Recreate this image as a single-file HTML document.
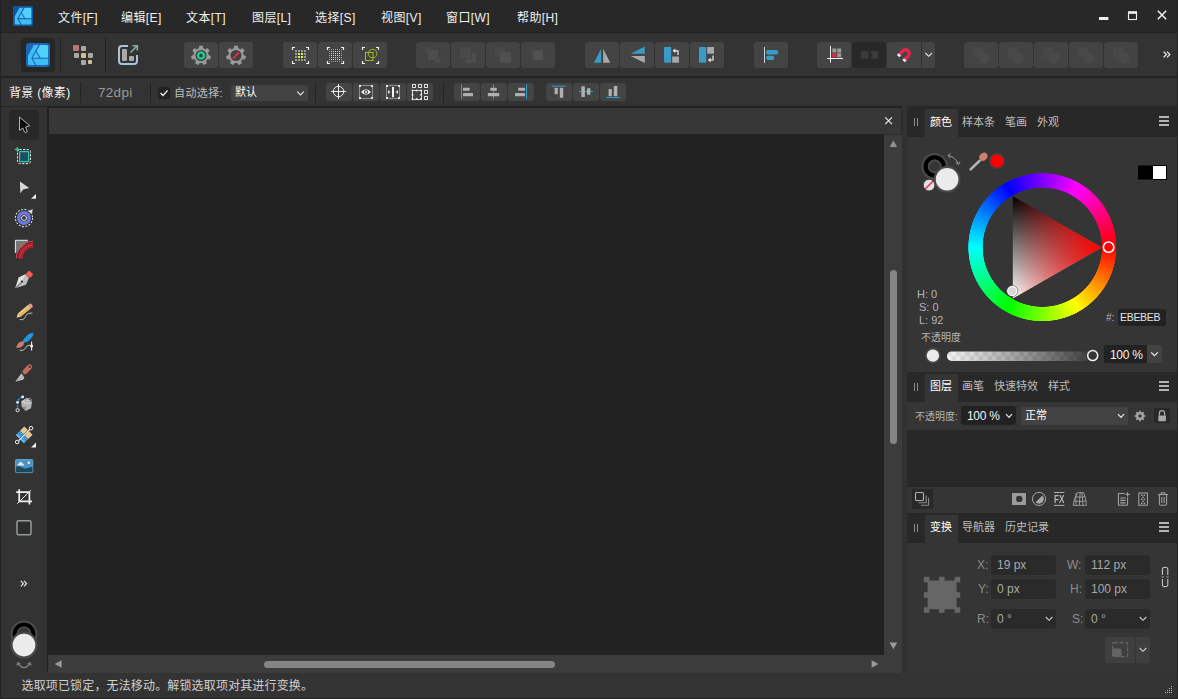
<!DOCTYPE html>
<html lang="zh-CN">
<head>
<meta charset="utf-8">
<title>Affinity Designer</title>
<style>
html,body{margin:0;padding:0;}
body{width:1178px;height:699px;overflow:hidden;background:#262626;position:relative;
 font-family:"Liberation Sans","Noto Sans CJK SC",sans-serif;color:#e6e6e6;font-size:12px;}
.abs,.abs *{position:absolute;}
#app{position:absolute;left:0;top:0;width:1178px;height:699px;overflow:hidden;background:#222222;}
#app div,#app span,#app svg{position:absolute;box-sizing:border-box;}
.t{white-space:nowrap;line-height:1;}
/* bars */
#menubar{left:1px;top:0;width:1176px;height:32px;background:#282828;border-top:1px solid #252525;}
#menubar .t{top:11px;font-size:12px;color:#f0f0f0;letter-spacing:.4px;}
#toolbar{left:1px;top:33px;width:1176px;height:43px;background:#333333;}
#ctxbar{left:1px;top:78px;width:1176px;height:28px;background:#333333;}
.tb{top:9px;width:34px;height:26px;background:#444444;border-radius:3px;}
.tb.dis{background:#434343;}
.cb{top:5px;width:26px;height:18px;background:#444444;border-radius:3px;}
.vsep{width:1px;background:#232323;}
/* left tools */
#tools{left:1px;top:107px;width:46px;height:566px;background:#333333;}
/* canvas */
#doctab{left:49px;top:108px;width:853px;height:27px;background:#373737;border-right:1px solid #2c2c2c;border-bottom:1px solid #2c2c2c;}
#canvas{left:49px;top:134px;width:835px;height:521px;background:#222222;}
#vscroll{left:884px;top:135px;width:18px;height:520px;background:#3c3c3c;}
#hscroll{left:48px;top:655px;width:854px;height:18px;background:#3c3c3c;}
#gap{left:902px;top:106px;width:5px;height:567px;background:#313131;}
/* right panels */
#right{left:907px;top:106px;width:270px;height:567px;background:#353535;}
.phead{left:0;width:270px;background:#282828;}
.ptab{background:#353535;}
.phtxt{font-size:11px;color:#bdbdbd;}
.phtxt.on{color:#ffffff;}
.lbl{font-size:11px;color:#b4b4b4;}
.ham{width:10px;height:10px;}
.ham i{position:absolute;left:0;width:10px;height:2px;background:#b4b4b4;}
.grip i{position:absolute;top:1px;width:1px;height:8px;background:#8a8a8a;}
#status{left:1px;top:673px;width:1176px;height:25px;background:#333333;}
</style>
</head>
<body>
<div id="app">

<!-- MENU BAR -->
<div id="menubar">
<svg style="left:12px;top:5px" width="20" height="20" viewBox="0 0 24 24"><g><rect width="24" height="24" rx="1.6" fill="#17529c"/><path d="M7.8 2 L12.7 2 L5.2 15.3 L9.1 22.1 L3.5 22.1 a1.5 1.5 0 0 1 -1.5 -1.5 L2 12.7Z" fill="#3ebef5"/><path d="M14 2 L20.6 2 a1.5 1.5 0 0 1 1.5 1.5 L22.1 14.8 L14.6 14.8 L10.6 8Z" fill="#50d1f9"/><path d="M10 9 L13.4 14.8 L6.7 14.8Z" fill="#45c8f8"/><path d="M6.7 15.8 L22.1 15.8 L22.1 20.6 a1.5 1.5 0 0 1 -1.5 1.5 L10.4 22.1Z" fill="#3dbff6"/></g></svg>
  <svg style="left:1089px;top:-1px" width="88" height="32" viewBox="1090 0 88 32"><rect x="1099" y="17" width="9.4" height="3" fill="#f0f0f0"/><rect x="1128.5" y="12.5" width="8" height="7" fill="none" stroke="#f0f0f0" stroke-width="1.1"/><rect x="1128" y="11.2" width="9" height="2.6" fill="#f0f0f0"/><path d="M1157.8 10.8 L1166.2 19.2 M1166.2 10.8 L1157.8 19.2" stroke="#f0f0f0" stroke-width="1.5"/></svg>
  <span class="t" style="left:57px">文件[F]</span>
  <span class="t" style="left:120px">编辑[E]</span>
  <span class="t" style="left:185px">文本[T]</span>
  <span class="t" style="left:251px">图层[L]</span>
  <span class="t" style="left:314px">选择[S]</span>
  <span class="t" style="left:380px">视图[V]</span>
  <span class="t" style="left:445px">窗口[W]</span>
  <span class="t" style="left:516px">帮助[H]</span>
</div>

<!-- MAIN TOOLBAR -->
<div id="toolbar">
<div style="left:20px;top:5px;width:34px;height:34px;background:#262626;border-radius:3px"></div>
<div class="vsep" style="left:59px;top:5px;height:34px"></div>
<div class="vsep" style="left:104px;top:5px;height:34px"></div>
<div class="tb " style="left:183px"></div>
<div class="tb " style="left:218px"></div>
<div class="tb " style="left:282px"></div>
<div class="tb " style="left:317px"></div>
<div class="tb " style="left:352px"></div>
<div class="tb dis" style="left:415px"></div>
<div class="tb dis" style="left:450px"></div>
<div class="tb dis" style="left:485px"></div>
<div class="tb dis" style="left:520px"></div>
<div class="tb " style="left:584px"></div>
<div class="tb " style="left:619px"></div>
<div class="tb " style="left:654px"></div>
<div class="tb " style="left:689px"></div>
<div class="tb " style="left:753px"></div>
<div class="tb " style="left:816px"></div>
<div class="tb" style="left:851px;background:#282828"></div>
<div class="tb" style="left:886px;border-radius:2px 0 0 2px"></div>
<div class="tb" style="left:921px;width:13px;border-radius:0 2px 2px 0"></div>
<div class="tb dis" style="left:963px"></div>
<div class="tb dis" style="left:998px"></div>
<div class="tb dis" style="left:1033px"></div>
<div class="tb dis" style="left:1068px"></div>
<div class="tb dis" style="left:1103px"></div>
<svg style="left:-1px;top:-33px" width="1178" height="110" viewBox="0 0 1178 110">
<g id="lg" transform="translate(26,43)"><rect width="24" height="24" rx="3" fill="#1c66b6"/><path d="M7.8 2 L12.7 2 L5.2 15.3 L9.1 22.1 L3.5 22.1 a1.5 1.5 0 0 1 -1.5 -1.5 L2 12.7Z" fill="#3ebef5"/><path d="M14 2 L20.6 2 a1.5 1.5 0 0 1 1.5 1.5 L22.1 14.8 L14.6 14.8 L10.6 8Z" fill="#50d1f9"/><path d="M10 9 L13.4 14.8 L6.7 14.8Z" fill="#45c8f8"/><path d="M6.7 15.8 L22.1 15.8 L22.1 20.6 a1.5 1.5 0 0 1 -1.5 1.5 L10.4 22.1Z" fill="#3dbff6"/></g>
<rect x="73" y="45" width="6" height="6" rx="1" fill="#b87678"/>
<rect x="81" y="46" width="5" height="5" rx="1" fill="#a8a8a8"/>
<rect x="74" y="53" width="5" height="5" rx="1" fill="#a8a8a8"/>
<rect x="81" y="53" width="5" height="5" rx="1" fill="#cfc08e"/>
<rect x="88" y="53" width="5" height="5" rx="1" fill="#a8a8a8"/>
<rect x="81" y="60" width="5" height="5" rx="1" fill="#a8a8a8"/>
<rect x="88" y="60" width="4" height="4" rx="1" fill="#cfc08e"/>
<path d="M128 46 H122 a3 3 0 0 0 -3 3 V61 a3 3 0 0 0 3 3 H134 a3 3 0 0 0 3 -3 V55" fill="none" stroke="#a9c4d6" stroke-width="2"/>
<rect x="122" y="49" width="5" height="12" rx="1" fill="#a8a8a8"/><rect x="129" y="56" width="5" height="5" rx="1" fill="#a8a8a8"/>
<path d="M130.5 52.5 L137 46 M132.5 45.8 H137.3 V50.6" fill="none" stroke="#7fae9c" stroke-width="1.6"/>
<g transform="translate(201,55.5)"><path d="M-1.75 -7.09 L-1.44 -9.39 L1.44 -9.39 L1.75 -7.09 L4.45 -5.79 L6.44 -6.98 L8.24 -4.73 L6.63 -3.05 L7.30 -0.13 L9.48 0.68 L8.83 3.50 L6.52 3.28 L4.65 5.62 L5.38 7.83 L2.77 9.09 L1.50 7.14 L-1.50 7.14 L-2.77 9.09 L-5.38 7.83 L-4.65 5.62 L-6.52 3.28 L-8.83 3.50 L-9.48 0.68 L-7.30 -0.13 L-6.63 -3.05 L-8.24 -4.73 L-6.44 -6.98 L-4.45 -5.79Z" fill="#9c9c9c" stroke="#9c9c9c" stroke-width=".8" stroke-linejoin="round"/><circle r="5.5" fill="#3a3a3a"/><circle r="3" fill="none" stroke="#1fc890" stroke-width="2.6"/></g>
<g transform="translate(236,55.5)"><path d="M-1.75 -7.09 L-1.44 -9.39 L1.44 -9.39 L1.75 -7.09 L4.45 -5.79 L6.44 -6.98 L8.24 -4.73 L6.63 -3.05 L7.30 -0.13 L9.48 0.68 L8.83 3.50 L6.52 3.28 L4.65 5.62 L5.38 7.83 L2.77 9.09 L1.50 7.14 L-1.50 7.14 L-2.77 9.09 L-5.38 7.83 L-4.65 5.62 L-6.52 3.28 L-8.83 3.50 L-9.48 0.68 L-7.30 -0.13 L-6.63 -3.05 L-8.24 -4.73 L-6.44 -6.98 L-4.45 -5.79Z" fill="#9c9c9c" stroke="#9c9c9c" stroke-width=".8" stroke-linejoin="round"/><circle r="5.5" fill="#424242"/><path d="M-3 3 L3 -3" stroke="#e8284a" stroke-width="2"/></g>
<path d="M292.5 50 v-2.5 h2.5 M306 47.5 h2.5 v2.5 M308.5 61 v2.5 h-2.5 M295 63.5 h-2.5 v-2.5" fill="none" stroke="#f0f0f0" stroke-width="1.2"/>
<rect x="295" y="50" width="2" height="2" fill="#9a9a9a"/>
<rect x="295" y="53" width="2" height="2" fill="#9a9a9a"/>
<rect x="295" y="56" width="2" height="2" fill="#9a9a9a"/>
<rect x="295" y="59" width="2" height="2" fill="#9a9a9a"/>
<rect x="298" y="50" width="2" height="2" fill="#9a9a9a"/>
<rect x="298" y="53" width="2" height="2" fill="#e6f23a"/>
<rect x="298" y="56" width="2" height="2" fill="#e6f23a"/>
<rect x="298" y="59" width="2" height="2" fill="#9a9a9a"/>
<rect x="301" y="50" width="2" height="2" fill="#9a9a9a"/>
<rect x="301" y="53" width="2" height="2" fill="#e6f23a"/>
<rect x="301" y="56" width="2" height="2" fill="#e6f23a"/>
<rect x="301" y="59" width="2" height="2" fill="#9a9a9a"/>
<rect x="304" y="50" width="2" height="2" fill="#9a9a9a"/>
<rect x="304" y="53" width="2" height="2" fill="#9a9a9a"/>
<rect x="304" y="56" width="2" height="2" fill="#9a9a9a"/>
<rect x="304" y="59" width="2" height="2" fill="#9a9a9a"/>
<path d="M327.5 50 v-2.5 h2.5 M341 47.5 h2.5 v2.5 M343.5 61 v2.5 h-2.5 M330 63.5 h-2.5 v-2.5" fill="none" stroke="#f0f0f0" stroke-width="1.2"/>
<rect x="329" y="49" width="1" height="1" fill="#9a9a9a"/>
<rect x="329" y="51" width="1" height="1" fill="#9a9a9a"/>
<rect x="329" y="53" width="1" height="1" fill="#9a9a9a"/>
<rect x="329" y="55" width="1" height="1" fill="#9a9a9a"/>
<rect x="329" y="57" width="1" height="1" fill="#9a9a9a"/>
<rect x="329" y="59" width="1" height="1" fill="#9a9a9a"/>
<rect x="329" y="61" width="1" height="1" fill="#9a9a9a"/>
<rect x="331" y="49" width="1" height="1" fill="#9a9a9a"/>
<rect x="331" y="51" width="1" height="1" fill="#dfee3a"/>
<rect x="331" y="53" width="1" height="1" fill="#dfee3a"/>
<rect x="331" y="55" width="1" height="1" fill="#dfee3a"/>
<rect x="331" y="57" width="1" height="1" fill="#dfee3a"/>
<rect x="331" y="59" width="1" height="1" fill="#dfee3a"/>
<rect x="331" y="61" width="1" height="1" fill="#9a9a9a"/>
<rect x="333" y="49" width="1" height="1" fill="#9a9a9a"/>
<rect x="333" y="51" width="1" height="1" fill="#dfee3a"/>
<rect x="333" y="53" width="1" height="1" fill="#dfee3a"/>
<rect x="333" y="55" width="1" height="1" fill="#dfee3a"/>
<rect x="333" y="57" width="1" height="1" fill="#dfee3a"/>
<rect x="333" y="59" width="1" height="1" fill="#dfee3a"/>
<rect x="333" y="61" width="1" height="1" fill="#9a9a9a"/>
<rect x="335" y="49" width="1" height="1" fill="#9a9a9a"/>
<rect x="335" y="51" width="1" height="1" fill="#dfee3a"/>
<rect x="335" y="53" width="1" height="1" fill="#dfee3a"/>
<rect x="335" y="55" width="1" height="1" fill="#dfee3a"/>
<rect x="335" y="57" width="1" height="1" fill="#dfee3a"/>
<rect x="335" y="59" width="1" height="1" fill="#dfee3a"/>
<rect x="335" y="61" width="1" height="1" fill="#9a9a9a"/>
<rect x="337" y="49" width="1" height="1" fill="#9a9a9a"/>
<rect x="337" y="51" width="1" height="1" fill="#dfee3a"/>
<rect x="337" y="53" width="1" height="1" fill="#dfee3a"/>
<rect x="337" y="55" width="1" height="1" fill="#dfee3a"/>
<rect x="337" y="57" width="1" height="1" fill="#dfee3a"/>
<rect x="337" y="59" width="1" height="1" fill="#dfee3a"/>
<rect x="337" y="61" width="1" height="1" fill="#9a9a9a"/>
<rect x="339" y="49" width="1" height="1" fill="#9a9a9a"/>
<rect x="339" y="51" width="1" height="1" fill="#dfee3a"/>
<rect x="339" y="53" width="1" height="1" fill="#dfee3a"/>
<rect x="339" y="55" width="1" height="1" fill="#dfee3a"/>
<rect x="339" y="57" width="1" height="1" fill="#dfee3a"/>
<rect x="339" y="59" width="1" height="1" fill="#dfee3a"/>
<rect x="339" y="61" width="1" height="1" fill="#9a9a9a"/>
<rect x="341" y="49" width="1" height="1" fill="#9a9a9a"/>
<rect x="341" y="51" width="1" height="1" fill="#9a9a9a"/>
<rect x="341" y="53" width="1" height="1" fill="#9a9a9a"/>
<rect x="341" y="55" width="1" height="1" fill="#9a9a9a"/>
<rect x="341" y="57" width="1" height="1" fill="#9a9a9a"/>
<rect x="341" y="59" width="1" height="1" fill="#9a9a9a"/>
<rect x="341" y="61" width="1" height="1" fill="#9a9a9a"/>
<path d="M362.5 50 v-2.5 h2.5 M376 47.5 h2.5 v2.5 M378.5 61 v2.5 h-2.5 M365 63.5 h-2.5 v-2.5" fill="none" stroke="#f0f0f0" stroke-width="1.2"/>
<rect x="365.5" y="52.5" width="7.5" height="8" fill="none" stroke="#a4b81a" stroke-width="1"/><circle cx="372.6" cy="53.6" r="4.3" fill="none" stroke="#a4b81a" stroke-width="1"/>
<rect x="425" y="47" width="6" height="6" rx="1" fill="#494949"/><rect x="428" y="50" width="10" height="10" rx="1" fill="#4e4e4e"/><rect x="434.5" y="57" width="6" height="6" rx="1" fill="#4a4a4a"/>
<rect x="460" y="47" width="11" height="11" rx="1.5" fill="#494949"/><path d="M472 53 h4 v9.5 h-10 v-3.5 h6z" fill="#4e4e4e"/>
<rect x="495" y="47" width="10" height="10" rx="1.5" fill="#494949"/><rect x="500" y="52" width="11" height="11" rx="1.5" fill="#505050"/>
<rect x="530" y="47" width="6" height="6" rx="1" fill="#464646"/><rect x="539" y="57" width="6" height="6" rx="1" fill="#464646"/><rect x="533" y="50" width="10" height="10" rx="1.5" fill="#515151"/>
<path d="M594 62.7 H601.1 V48.7Z" fill="#3a9bc7"/><path d="M603.1 48.7 V62.7 H610.3Z" fill="#a8a8a8"/>
<path d="M630.7 53.7 L644.8 46.5 V53.7Z" fill="#3a9bc7"/><path d="M630.7 56 H644.8 V63.1Z" fill="#a8a8a8"/>
<rect x="664" y="47" width="7.2" height="15.7" rx="1" fill="#3a9bc7"/><rect x="672.2" y="56.5" width="6.8" height="6.2" fill="#a8a8a8"/><path d="M678 55 V50.8 H674" fill="none" stroke="#f0f0f0" stroke-width="1.2"/><path d="M672.6 50.8 L675.3 48.6 V53Z" fill="#f0f0f0"/>
<rect x="699" y="47" width="7.2" height="15.7" rx="1" fill="#3a9bc7"/><rect x="707.2" y="47" width="6.8" height="6.7" fill="#a8a8a8"/><path d="M713 55.6 V60 H709.5" fill="none" stroke="#f0f0f0" stroke-width="1.2"/><path d="M707.8 60 L710.6 57.8 V62.2Z" fill="#f0f0f0"/>
<rect x="764" y="47" width="1" height="16" fill="#d0d0d0"/><rect x="766" y="50" width="12.2" height="4.4" rx="2" fill="#3a9bc7"/><rect x="766" y="55.7" width="8.2" height="4.4" rx="2" fill="#3a9bc7"/>
<rect x="830" y="46" width="1" height="16.5" fill="#f0f0f0"/><rect x="827" y="58" width="16" height="1" fill="#f0f0f0"/>
<rect x="832.3" y="48.5" width="4" height="4" fill="#9a9a9a"/><rect x="837.2" y="48.5" width="4" height="4" fill="#9a9a9a"/><rect x="832.3" y="53.3" width="4" height="4" fill="#e8284a"/><rect x="837.2" y="53.3" width="4" height="4" fill="#9a9a9a"/>
<rect x="861" y="51.2" width="7.5" height="7.4" fill="#3c3c3c"/><path d="M870 51.2 h8 v7.4 h-8 l2.6 -3.7z" fill="#3c3c3c"/>
<g transform="translate(905.6,53.4) rotate(42)"><path d="M-3.7 5.2 V0 a3.7 3.7 0 0 1 7.4 0 V5.2" fill="none" stroke="#e3274a" stroke-width="3.4"/><rect x="-5.4" y="4.6" width="3.4" height="2.4" fill="#f0f0f0"/><rect x="2" y="4.6" width="3.4" height="2.4" fill="#f0f0f0"/></g>
<path d="M925.4 53 L928.7 56.3 L932 53" fill="none" stroke="#e8e8e8" stroke-width="1.1"/>
<rect x="973" y="47.3" width="10.3" height="10.3" fill="#484848"/><circle cx="984" cy="58.3" r="5.4" fill="#4a4a4a"/>
<rect x="1008" y="47.3" width="10.3" height="10.3" fill="#484848"/><circle cx="1019" cy="58.3" r="5.4" fill="#4a4a4a"/>
<rect x="1043" y="47.3" width="10.3" height="10.3" fill="#484848"/><circle cx="1054" cy="58.3" r="5.4" fill="#4a4a4a"/>
<rect x="1078" y="47.3" width="10.3" height="10.3" fill="#484848"/><circle cx="1089" cy="58.3" r="5.4" fill="#4a4a4a"/>
<rect x="1113" y="47.3" width="10.3" height="10.3" fill="#484848"/><circle cx="1124" cy="58.3" r="5.4" fill="#4a4a4a"/>
<path d="M1163.6 51.6 L1166.4 54.5 L1163.6 57.4 M1167 51.6 L1169.8 54.5 L1167 57.4" fill="none" stroke="#e6e6e6" stroke-width="1.3"/>
</svg>
</div>

<!-- CONTEXT BAR -->
<div id="ctxbar">
<span class="t" style="left:8px;top:9px;font-size:12px;letter-spacing:.3px;color:#f2f2f2">背景 (像素)</span>
<div class="vsep" style="left:79px;top:4px;height:21px"></div>
<span class="t" style="left:97px;top:8px;font-size:13.5px;letter-spacing:.3px;color:#9a9a9a">72dpi</span>
<div class="vsep" style="left:149px;top:4px;height:21px"></div>
<div style="left:157px;top:9px;width:12px;height:12px;background:#222;border-radius:2px"></div>
<span class="t" style="left:173px;top:10px;font-size:11px;letter-spacing:.4px;color:#bdbdbd">自动选择:</span>
<div style="left:230px;top:7px;width:77px;height:16px;background:#424242;border-radius:2px"></div>
<span class="t" style="left:234px;top:9px;font-size:11px;color:#ffffff">默认</span>
<div class="vsep" style="left:314px;top:4px;height:21px"></div>
<div class="cb" style="left:325px"></div>
<div class="cb" style="left:352px"></div>
<div class="cb" style="left:379px"></div>
<div class="cb" style="left:406px"></div>
<div class="vsep" style="left:442px;top:4px;height:21px"></div>
<div class="cb" style="left:453px"></div>
<div class="cb" style="left:480px"></div>
<div class="cb" style="left:507px"></div>
<div class="cb" style="left:545px"></div>
<div class="cb" style="left:572px"></div>
<div class="cb" style="left:599px"></div>
<svg style="left:-1px;top:-78px" width="1178" height="110" viewBox="0 0 1178 110">
<path d="M160.6 93 L163 95.5 L167.6 90.4" fill="none" stroke="#f0f0f0" stroke-width="1.4"/>
<path d="M297.2 91.7 L300.5 95 L303.8 91.7" fill="none" stroke="#e8e8e8" stroke-width="1.1"/>
<g stroke="#efefef" stroke-width="1" fill="none"><circle cx="338.5" cy="91.5" r="5.2"/><path d="M331 91.5 H346 M338.5 84 V99"/></g>
<rect x="359.5" y="85.5" width="13" height="13" fill="none" stroke="#8e8e8e" stroke-width="1"/><rect x="359" y="85" width="2" height="2" fill="#e4e4e4"/><rect x="371" y="85" width="2" height="2" fill="#e4e4e4"/><rect x="359" y="97" width="2" height="2" fill="#e4e4e4"/><rect x="371" y="97" width="2" height="2" fill="#e4e4e4"/>
<path d="M361 92 Q366 86.6 371 92 Q366 97.4 361 92Z" fill="#f4f4f4"/><circle cx="366" cy="92" r="2.1" fill="#424242"/><circle cx="366" cy="92" r="1" fill="#f4f4f4"/>
<rect x="386.5" y="85.5" width="13" height="13" fill="none" stroke="#8e8e8e" stroke-width="1"/><rect x="386" y="85" width="2" height="2" fill="#e4e4e4"/><rect x="398" y="85" width="2" height="2" fill="#e4e4e4"/><rect x="386" y="97" width="2" height="2" fill="#e4e4e4"/><rect x="398" y="97" width="2" height="2" fill="#e4e4e4"/>
<rect x="392" y="87" width="2" height="10.2" fill="#f4f4f4"/><path d="M388 90 L390.4 92 L388 94Z M398 90 L395.6 92 L398 94Z" fill="#e0e0e0"/>
<rect x="412.5" y="84.5" width="3" height="3" fill="none" stroke="#d8d8d8" stroke-width="1"/>
<rect x="418.5" y="84.5" width="3" height="3" fill="none" stroke="#d8d8d8" stroke-width="1"/>
<rect x="424.5" y="84.5" width="3" height="3" fill="none" stroke="#d8d8d8" stroke-width="1"/>
<rect x="424.5" y="90.5" width="3" height="3" fill="none" stroke="#d8d8d8" stroke-width="1"/>
<rect x="424.5" y="96.5" width="3" height="3" fill="none" stroke="#d8d8d8" stroke-width="1"/>
<rect x="412.5" y="90.5" width="9" height="9" fill="none" stroke="#d0d0d0" stroke-width="1"/>
<rect x="411.7" y="89.7" width="1.6" height="1.6" fill="#f4f4f4"/>
<rect x="415.9" y="89.7" width="1.6" height="1.6" fill="#f4f4f4"/>
<rect x="420.2" y="89.7" width="1.6" height="1.6" fill="#f4f4f4"/>
<rect x="411.7" y="93.9" width="1.6" height="1.6" fill="#f4f4f4"/>
<rect x="420.2" y="93.9" width="1.6" height="1.6" fill="#f4f4f4"/>
<rect x="411.7" y="98.2" width="1.6" height="1.6" fill="#f4f4f4"/>
<rect x="415.9" y="98.2" width="1.6" height="1.6" fill="#f4f4f4"/>
<rect x="420.2" y="98.2" width="1.6" height="1.6" fill="#f4f4f4"/>
<rect x="461" y="84.5" width="1" height="14.5" fill="#2f9fd0"/><rect x="463" y="87.8" width="6.6" height="3" rx=".5" fill="#b0b0b0"/><rect x="463" y="93" width="10" height="3.2" rx=".5" fill="#b0b0b0"/>
<rect x="493" y="84.5" width="1" height="14.5" fill="#2f9fd0"/><rect x="490.3" y="87.8" width="6.4" height="3" rx=".5" fill="#b0b0b0"/><rect x="487.8" y="93" width="11.4" height="3.2" rx=".5" fill="#b0b0b0"/>
<rect x="526" y="84.5" width="1" height="14.5" fill="#2f9fd0"/><rect x="518.3" y="87.8" width="6.7" height="3" rx=".5" fill="#b0b0b0"/><rect x="515" y="93" width="10" height="3.2" rx=".5" fill="#b0b0b0"/>
<rect x="552" y="85.7" width="14" height="1" fill="#2f9fd0"/><rect x="554.6" y="87.8" width="3.2" height="6.5" rx=".5" fill="#b0b0b0"/><rect x="559.8" y="87.8" width="3.4" height="10" rx=".5" fill="#b0b0b0"/>
<rect x="579" y="91" width="14" height="1" fill="#2f9fd0"/><rect x="581.4" y="86.2" width="3.5" height="10.8" rx=".5" fill="#b0b0b0"/><rect x="587" y="88.3" width="3.4" height="6.4" rx=".5" fill="#b0b0b0"/>
<rect x="606" y="97" width="14" height="1" fill="#2f9fd0"/><rect x="608.6" y="89" width="3.2" height="7.2" rx=".5" fill="#b0b0b0"/><rect x="613.8" y="85.9" width="3.5" height="10.3" rx=".5" fill="#b0b0b0"/>
</svg>
</div>

<!-- LEFT TOOLS -->
<div id="tools">
<div style="left:8px;top:3px;width:30px;height:30px;background:#282828;border-radius:3px"></div>
<svg style="left:-1px;top:-107px" width="60" height="699" viewBox="0 0 60 699">
<path d="M19.5 117 L19.5 130.4 L22.7 128 L24.6 132.2 Q26 133.2 27.3 131.6 L25.6 127 L29.8 125.8Z" fill="#0c0c0c" stroke="#b4b4b4" stroke-width="1" stroke-linejoin="round"/>
<rect x="17.5" y="149.6" width="13" height="14" rx="2" fill="none" stroke="#f0f0f0" stroke-width="1" stroke-dasharray="2.2 1.4"/>
<rect x="19.6" y="151.6" width="9" height="10" rx=".6" fill="#1f4d66" stroke="#2ecfa6" stroke-width="1.2"/>
<path d="M14.8 149.4 H19.6 M17.2 147 V151.8" stroke="#2ecfa6" stroke-width="1.1"/>
<path d="M19.9 181.6 L29.3 188 L23.2 189.4 L20.3 193.2Z" fill="#d6d6d6"/>
<path d="M36 194 V198.7 H31Z" fill="#f0f0f0"/>
<circle cx="24" cy="218" r="8.6" fill="none" stroke="#e0e0e0" stroke-width="1.1" stroke-dasharray="1.8 1.6"/>
<circle cx="24" cy="218" r="5.2" fill="none" stroke="#6a78e0" stroke-width="3.4"/>
<circle cx="24" cy="218" r="2.5" fill="#3a3a3a" stroke="#e0e0e0" stroke-width="1"/>
<path d="M27.4 211 L33.2 208.8 L32 214.4Z" fill="#e4e4e4" stroke="#333" stroke-width=".6"/>
<path d="M15.4 253 V240.3 H28" fill="none" stroke="#f0f0f0" stroke-width="1"/><path d="M16 241 H28 L16 253Z" fill="#777"/>
<path d="M16 241 H27.5 A17 17 0 0 0 16 252Z" fill="#777"/>
<path d="M17.8 258.2 A15.4 15.4 0 0 1 33.2 242.8 V247.6 A10.6 10.6 0 0 0 22.6 258.2Z" fill="#b8222c"/>
<path d="M16.3 258.2 A16.9 16.9 0 0 1 33.2 241.3" fill="none" stroke="#f0476a" stroke-width=".9"/><path d="M20.2 258.2 A13 13 0 0 1 33.2 245.2" fill="none" stroke="#d9566a" stroke-width=".8" stroke-dasharray="1.4 1.6" opacity=".7"/>
<path d="M15.3 288.2 L18.8 277.6 L25.6 274.2 L29 277.8 L26 284.8Z" fill="#bdbdbd"/>
<path d="M15.3 288.2 L18.8 277.6 L25.6 274.2 L21.9 281.7Z" fill="#dedede"/>
<path d="M15.5 288 L21.9 281.7" stroke="#222" stroke-width=".8"/><circle cx="22" cy="281.6" r="1" fill="#111"/>
<rect x="-2.9" y="-2.4" width="5.8" height="4.8" rx=".8" transform="translate(29.6,274.2) rotate(45)" fill="#ff5a50"/>
<g transform="translate(16.6,317.4) rotate(-39.6)"><path d="M0 0 L3.6 -2.2 V2.2Z" fill="#f0ddb0"/><path d="M0 0 L1.2 -.75 V.75Z" fill="#c88"/><rect x="3.6" y="-2.2" width="13.6" height="4.4" fill="#e3b95f"/><rect x="3.6" y="-2.2" width="13.6" height="1.3" fill="#eccb80"/><rect x="17.2" y="-2.2" width="2.6" height="4.4" rx="1" fill="#f29bb0"/></g>
<path d="M19.8 319.3 C24 320.8 24.5 318 26 315.6 C27.4 313.4 29.5 313 32.4 313.2" fill="none" stroke="#c8c8c8" stroke-width="1"/>
<g transform="translate(28.2,337.8) rotate(-42.5)"><ellipse cx="0" cy="0" rx="6.8" ry="2.5" fill="#2296dc"/></g>
<path d="M16.2 347.7 C17 343.8 20.2 340.8 23.6 341.4 C25 344.4 22 348.3 16.2 347.7Z" fill="#c97d6e"/>
<path d="M19.8 350.2 C24 351.2 25 348.6 26.2 347 C27.4 345.4 28.8 345.2 31 345.4" fill="none" stroke="#d0d0d0" stroke-width="1"/>
<path d="M31.6 341.4 V350.6" stroke="#f0f0f0" stroke-width="1.1"/><circle cx="31.6" cy="346" r="1.5" fill="#f0f0f0"/>
<g transform="translate(27.2,369.4) rotate(-45)"><rect x="-5.6" y="-2.5" width="11.6" height="5" rx="2.4" fill="#c26d5c"/><circle cx="3.6" cy="0" r="1.1" fill="#333"/></g>
<path d="M15.2 381.8 L21.4 373.2 L24.4 377.2Z" fill="#b8b8b8"/><path d="M15.2 381.8 L24.4 377.2 L23.2 379.4Z" fill="#e4e4e4"/>
<path d="M22.6 396.9 Q18 398.4 17.6 402.3 V410" fill="none" stroke="#2a8ccc" stroke-width="1.6" stroke-dasharray="2.4 1.2"/>
<circle cx="22.7" cy="396.9" r="1.4" fill="#f0f0f0"/><circle cx="17.6" cy="402.3" r="1.4" fill="#f0f0f0"/><circle cx="17.6" cy="410.2" r="1.6" fill="#333" stroke="#e8e8e8" stroke-width="1"/>
<path d="M21.2 401.6 L27 398 L32 402.2 L31 408.2 L25.6 411 L21.6 406.6Z" fill="#b4b4b4"/><path d="M21.2 401.6 L27 398 L32 402.2 L27 404.6Z" fill="#cfcfcf"/><ellipse cx="28.4" cy="400.4" rx="3.4" ry="1.6" transform="rotate(-14 28.4 400.4)" fill="none" stroke="#9a9a9a" stroke-width=".9"/><path d="M21.6 406.6 L25.6 411 L26.4 406.4Z" fill="#8e8e8e"/>
<g transform="translate(24.2,434.8) rotate(-45)"><rect x="-6.2" y="-5.8" width="6.2" height="5" fill="#3a9ad8"/><rect x="0" y="-5.8" width="6" height="5" fill="#e6c98e"/><rect x="-6.2" y=".8" width="6.2" height="5" fill="#3a9ad8"/><rect x="0" y=".8" width="6" height="5" fill="#e6c98e"/><rect x="-6.2" y="-5.8" width="2" height="5" fill="#8ccaf0" opacity=".6"/><rect x="-6.2" y=".8" width="2" height="5" fill="#8ccaf0" opacity=".6"/></g>
<path d="M18.4 440.8 L29.8 429.4" stroke="#f4f4f4" stroke-width="1.2"/><circle cx="17.2" cy="442" r="1.8" fill="#333" stroke="#f4f4f4" stroke-width="1"/><circle cx="31" cy="428.2" r="1.8" fill="#333" stroke="#f4f4f4" stroke-width="1"/>
<path d="M36 442.6 V447.4 H31Z" fill="#f0f0f0"/>
<rect x="15.4" y="459.6" width="17.4" height="13" rx="1" fill="#4a93c4" stroke="#6fb0da" stroke-width=".8"/>
<path d="M15.8 466.8 Q19 465.6 22 467.4 T28 468 T32.4 466.4 V472.2 H15.8Z" fill="#1d4a60"/>
<path d="M17 465.4 L20.6 461.6 L23.4 464 L24.6 465.4Z" fill="#e8eef2"/><circle cx="28.8" cy="462.8" r="1.3" fill="#e8eef2"/>
<path d="M19.2 489.2 V501.4 H32 M16.2 492.2 H29.4 V504.4" fill="none" stroke="#f0f0f0" stroke-width="1.7"/><path d="M17.2 503.8 L30.8 490.2" stroke="#f0f0f0" stroke-width="1"/>
<rect x="17" y="520.8" width="14" height="14" rx="1.5" fill="#2a2e2e" stroke="#9a9a9a" stroke-width="1.5"/>
<path d="M20.8 580.8 L23.4 583.6 L20.8 586.4 M24 580.8 L26.6 583.6 L24 586.4" fill="none" stroke="#e6e6e6" stroke-width="1.2"/>
<circle cx="24" cy="634" r="12.4" fill="none" stroke="#4a4a4a" stroke-width="2.2"/><circle cx="24" cy="634" r="9.4" fill="none" stroke="#000" stroke-width="3.8"/><circle cx="24" cy="634" r="6.65" fill="none" stroke="#4a4a4a" stroke-width="1.7"/>
<circle cx="24" cy="645.1" r="12.4" fill="#ebebeb" stroke="#4a4a4a" stroke-width="2.2"/>
<path d="M18.2 664 Q24 671.4 29.8 664" fill="none" stroke="#8c8c8c" stroke-width="1.1"/><path d="M16.8 665.6 L18 662.6 L20.6 664.4 M31.2 665.6 L30 662.6 L27.4 664.4" fill="none" stroke="#8c8c8c" stroke-width="1.1"/>
</svg>
</div>

<!-- DOCUMENT AREA -->
<div id="doctab"><svg style="left:835px;top:8px" width="10" height="10" viewBox="0 0 10 10"><path d="M1.2 1.4 L8 8.2 M8 1.4 L1.2 8.2" stroke="#ececec" stroke-width="1.15"/></svg></div>
<div id="canvas"></div>
<div id="vscroll">
<svg style="left:0;top:-1px" width="17" height="521" viewBox="0 0 17 521"><path d="M5.6 13 L9.4 6.2 L13.2 13Z" fill="#8e8e8e"/><path d="M5.6 508.4 L13.2 508.4 L9.4 515.2Z" fill="#9a9a9a"/><rect x="6" y="136" width="7" height="174" rx="3.5" fill="#858585"/></svg>
</div>
<div id="hscroll">
<svg style="left:1px;top:0" width="852" height="18" viewBox="0 0 852 18"><path d="M12.6 5.2 L5.6 9 L12.6 12.8Z" fill="#9a9a9a"/><path d="M822.6 5.2 L829.6 9 L822.6 12.8Z" fill="#9a9a9a"/><rect x="215" y="6" width="291" height="7" rx="3.5" fill="#858585"/></svg>
</div>
<div id="gap"></div>

<!-- RIGHT PANELS -->
<div id="right">
<div class="phead" style="top:0px;height:31px"></div>
<div class="ptab" style="left:18px;top:3px;width:33px;height:28px"></div>
<div class="grip" style="left:7px;top:11px;width:5px;height:9px"><i style="left:0"></i><i style="left:3px"></i></div>
<span class="t phtxt on" style="left:23px;top:11px">颜色</span>
<span class="t phtxt" style="left:55px;top:11px">样本条</span>
<span class="t phtxt" style="left:98px;top:11px">笔画</span>
<span class="t phtxt" style="left:130px;top:11px">外观</span>
<div class="ham" style="left:252px;top:10px"><i style="top:0"></i><i style="top:4px"></i><i style="top:8px"></i></div>
<div style="left:61px;top:67px;width:150px;height:150px;background:conic-gradient(from 90deg at 74.3px 74.2px,#ff0000,#ffff00,#00ff00,#00ffff,#0000ff,#ff00ff,#ff0000);-webkit-mask:radial-gradient(circle at 74.3px 74.2px,transparent 59.3px,#000 59.9px,#000 73.7px,transparent 74.3px);mask:radial-gradient(circle at 74.3px 74.2px,transparent 59.3px,#000 59.9px,#000 73.7px,transparent 74.3px)"></div>
<span class="t lbl" style="left:10px;top:183px">H: 0</span>
<span class="t lbl" style="left:12px;top:196px">S: 0</span>
<span class="t lbl" style="left:12px;top:209px">L: 92</span>
<span class="t lbl" style="left:199px;top:207px;font-size:10px">#:</span>
<div style="left:211px;top:203px;width:48px;height:17px;background:#222;border-radius:2px"></div>
<span class="t" style="left:213px;top:206px;font-size:10.5px;letter-spacing:-.3px;color:#e4e4e4">EBEBEB</span>
<span class="t lbl" style="left:14px;top:227px;font-size:10px">不透明度</span>
<div style="left:197px;top:239px;width:43px;height:18px;background:#222;border-radius:2px 0 0 2px"></div>
<div style="left:240px;top:239px;width:15px;height:18px;background:#424242;border-radius:0 2px 2px 0"></div>
<span class="t" style="left:203px;top:243px;font-size:12px;letter-spacing:-.3px;color:#f4f4f4">100 %</span>
<div class="phead" style="top:266px;height:30px"></div>
<div class="ptab" style="left:18px;top:268px;width:33px;height:28px"></div>
<div class="grip" style="left:7px;top:276px;width:5px;height:9px"><i style="left:0"></i><i style="left:3px"></i></div>
<span class="t phtxt on" style="left:23px;top:275px">图层</span>
<span class="t phtxt" style="left:55px;top:275px">画笔</span>
<span class="t phtxt" style="left:87px;top:275px">快速特效</span>
<span class="t phtxt" style="left:141px;top:275px">样式</span>
<div class="ham" style="left:252px;top:275px"><i style="top:0"></i><i style="top:4px"></i><i style="top:8px"></i></div>
<span class="t lbl" style="left:8px;top:306px;font-size:10px">不透明度:</span>
<div style="left:54px;top:300px;width:55px;height:19px;background:#222;border-radius:3px"></div>
<span class="t" style="left:60px;top:304px;font-size:12px;letter-spacing:-.3px;color:#f4f4f4">100 %</span>
<div style="left:114px;top:301px;width:107px;height:18px;background:#424242;border-radius:2px"></div>
<span class="t" style="left:118px;top:304px;font-size:11px;color:#ffffff">正常</span>
<div style="left:247px;top:302px;width:16px;height:15px;background:#282828;border-radius:1px"></div>
<div style="left:0;top:324px;width:270px;height:57px;background:#282828"></div>
<div style="left:5px;top:383px;width:21px;height:20px;background:#282828;border-radius:1px"></div>
<span class="t" style="left:147px;top:388px;font-size:11px;font-weight:bold;color:#b4b4b4;transform:scaleX(.74);transform-origin:0 0">FX</span>
<div class="phead" style="top:407px;height:30px"></div>
<div class="ptab" style="left:18px;top:409px;width:33px;height:28px"></div>
<div class="grip" style="left:7px;top:417px;width:5px;height:9px"><i style="left:0"></i><i style="left:3px"></i></div>
<span class="t phtxt on" style="left:23px;top:416px">变换</span>
<span class="t phtxt" style="left:55px;top:416px">导航器</span>
<span class="t phtxt" style="left:98px;top:416px">历史记录</span>
<div class="ham" style="left:252px;top:416px"><i style="top:0"></i><i style="top:4px"></i><i style="top:8px"></i></div>
<span class="t" style="left:70px;top:453px;font-size:12px;color:#8c8c8c">X:</span>
<div style="left:84px;top:449px;width:65px;height:20px;background:#2a2a2a;border-radius:3px"></div>
<span class="t" style="left:90px;top:453px;font-size:12px;color:#a8a8a8">19 px</span>
<span class="t" style="left:160px;top:453px;font-size:12px;color:#8c8c8c">W:</span>
<div style="left:178px;top:449px;width:65px;height:20px;background:#2a2a2a;border-radius:3px"></div>
<span class="t" style="left:184px;top:453px;font-size:12px;color:#a8a8a8">112 px</span>
<span class="t" style="left:71px;top:477px;font-size:12px;color:#8c8c8c">Y:</span>
<div style="left:84px;top:473px;width:65px;height:20px;background:#2a2a2a;border-radius:3px"></div>
<span class="t" style="left:90px;top:477px;font-size:12px;color:#a8a8a8">0 px</span>
<span class="t" style="left:163px;top:477px;font-size:12px;color:#8c8c8c">H:</span>
<div style="left:178px;top:473px;width:65px;height:20px;background:#2a2a2a;border-radius:3px"></div>
<span class="t" style="left:184px;top:477px;font-size:12px;color:#a8a8a8">100 px</span>
<span class="t" style="left:70px;top:507px;font-size:12px;color:#8c8c8c">R:</span>
<div style="left:84px;top:503px;width:65px;height:20px;background:#2a2a2a;border-radius:3px"></div>
<span class="t" style="left:90px;top:507px;font-size:12px;color:#a8a8a8">0 °</span>
<span class="t" style="left:165px;top:507px;font-size:12px;color:#8c8c8c">S:</span>
<div style="left:178px;top:503px;width:65px;height:20px;background:#2a2a2a;border-radius:3px"></div>
<span class="t" style="left:184px;top:507px;font-size:12px;color:#a8a8a8">0 °</span>
<div style="left:198px;top:531px;width:30px;height:26px;background:#3f3f3f;border-radius:3px 0 0 3px"></div>
<div style="left:229px;top:531px;width:14px;height:26px;background:#3f3f3f;border-radius:0 3px 3px 0"></div>
<svg style="left:0;top:0" width="270" height="567" viewBox="907 106 270 567">
<defs><linearGradient id="tg1" x1="0" y1="0" x2="0" y2="1"><stop offset="0" stop-color="#000"/><stop offset="1" stop-color="#fff"/></linearGradient><linearGradient id="tg2" x1="0" y1="0" x2="1" y2="0"><stop offset="0" stop-color="#ff0000" stop-opacity="0"/><stop offset="1" stop-color="#ff0000" stop-opacity="1"/></linearGradient>
<linearGradient id="og" x1="0" y1="0" x2="1" y2="0"><stop offset="0" stop-color="#f6f6f6"/><stop offset=".3" stop-color="#c4c4c4"/><stop offset=".65" stop-color="#858585"/><stop offset="1" stop-color="#404040"/></linearGradient>
<pattern id="chk" x="947" y="351.5" width="9" height="9" patternUnits="userSpaceOnUse"><rect width="4.5" height="4.5" fill="#000" fill-opacity=".09"/><rect x="4.5" y="4.5" width="4.5" height="4.5" fill="#000" fill-opacity=".09"/></pattern>
<linearGradient id="og2" x1="0" y1="0" x2="1" y2="0"><stop offset="0" stop-color="#333" stop-opacity="0"/><stop offset="1" stop-color="#333" stop-opacity=".85"/></linearGradient>
</defs>
<path d="M1101.6 247.4 L1012.8 196.2 L1012.8 298.6Z" fill="url(#tg1)"/><path d="M1101.6 247.4 L1012.8 196.2 L1012.8 298.6Z" fill="url(#tg2)"/>
<circle cx="1108.6" cy="247.2" r="5.2" fill="#ff0000" stroke="#fff" stroke-width="1.6"/>
<circle cx="1012.2" cy="291" r="4.6" fill="#d8d8d8" stroke="#fff" stroke-width="1.4"/><circle cx="1012.2" cy="291" r="5.6" fill="none" stroke="#555" stroke-width=".6"/>
<circle cx="934.7" cy="166.4" r="12.2" fill="none" stroke="#4a4a4a" stroke-width="2.4"/><circle cx="934.7" cy="166.4" r="8.95" fill="none" stroke="#000" stroke-width="4.2"/><circle cx="934.7" cy="166.4" r="6.05" fill="none" stroke="#4a4a4a" stroke-width="1.7"/>
<circle cx="929.1" cy="185.1" r="5.8" fill="#e2e2e2" stroke="#464646" stroke-width="1"/><path d="M925.3 188.9 L932.9 181.3" stroke="#e8385a" stroke-width="1.6"/>
<circle cx="947.1" cy="179.2" r="12.35" fill="#ebebeb" stroke="#4a4a4a" stroke-width="2.1"/>
<path d="M948.6 155.6 Q955.6 157 958.2 164" fill="none" stroke="#9a9a9a" stroke-width="1"/><path d="M950.6 153.4 L948 155.4 L950.2 158 M955.8 162.6 L958.4 164.6 L960 161.6" fill="none" stroke="#9a9a9a" stroke-width="1"/>
<path d="M970.6 169.4 L979.6 160.8" stroke="#b4b4b4" stroke-width="2.6" stroke-linecap="round"/><ellipse cx="983.4" cy="156.8" rx="4.4" ry="3.6" transform="rotate(-42 983.4 156.8)" fill="#d2806e"/>
<circle cx="996.9" cy="161" r="7.4" fill="#ff0000" stroke="#424242" stroke-width="1.6"/>
<rect x="1138" y="165.5" width="14.5" height="14" fill="#000"/><rect x="1152.5" y="165.5" width="14" height="14" fill="#fff" stroke="#000" stroke-width="1"/>
<circle cx="932.9" cy="355.6" r="7" fill="#ebebeb" stroke="#4a4a4a" stroke-width="1.6"/>
<rect x="947" y="351.5" width="143.5" height="9.4" rx="4.6" fill="url(#og)"/><rect x="947" y="351.5" width="143.5" height="9.4" rx="4.6" fill="url(#chk)"/>
<circle cx="1092.7" cy="355.6" r="5" fill="#353535" stroke="#f4f4f4" stroke-width="1.5"/>
<path d="M1151.2 352.4 L1154.5 355.7 L1157.8 352.4" fill="none" stroke="#e6e6e6" stroke-width="1.3"/>
<path d="M1006 414.2 L1009 417.3 L1012 414.2" fill="none" stroke="#ececec" stroke-width="1.2"/>
<path d="M1118 414.2 L1121 417.3 L1124 414.2" fill="none" stroke="#ececec" stroke-width="1.2"/>
<g transform="translate(1140,416)"><path d="M-0.89 -4.00 L-0.72 -5.35 L0.72 -5.35 L0.89 -4.00 L2.20 -3.46 L3.28 -4.29 L4.29 -3.28 L3.46 -2.20 L4.00 -0.89 L5.35 -0.72 L5.35 0.72 L4.00 0.89 L3.46 2.20 L4.29 3.28 L3.28 4.29 L2.20 3.46 L0.89 4.00 L0.72 5.35 L-0.72 5.35 L-0.89 4.00 L-2.20 3.46 L-3.28 4.29 L-4.29 3.28 L-3.46 2.20 L-4.00 0.89 L-5.35 0.72 L-5.35 -0.72 L-4.00 -0.89 L-3.46 -2.20 L-4.29 -3.28 L-3.28 -4.29 L-2.20 -3.46Z" fill="#a4a4a4"/><circle r="1.7" fill="#353535"/></g>
<rect x="1158.3" y="415.4" width="7.6" height="5.8" rx=".4" fill="#a8a8a8"/><path d="M1159.4 415.6 V413.2 a2.6 2.6 0 0 1 5.2 0 V415.6" fill="none" stroke="#a8a8a8" stroke-width="1.2"/>
<rect x="915.5" y="492.5" width="8" height="8" rx="1" fill="#282828" stroke="#b0b0b0" stroke-width="1.1"/><path d="M926.2 495.4 V502.8 H918.6 M928.6 497.8 V505.2 H921" fill="none" stroke="#8a8a8a" stroke-width="1.1"/>
<rect x="1012" y="493" width="14" height="12" fill="#9a9a9a"/><circle cx="1019.2" cy="498.9" r="3.2" fill="#353535"/>
<circle cx="1039" cy="498.9" r="6.6" fill="none" stroke="#a8a8a8" stroke-width="1"/><path d="M1042.4 495.5 A4.8 4.8 0 0 1 1035.6 502.3Z" fill="#a8a8a8"/>
<path d="M1054 492.5 H1064.4 M1054 505.4 H1064.4" stroke="#b0b0b0" stroke-width="1"/>
<path d="M1077.6 492.6 H1083.6 Q1086.4 499 1086.4 505.4 H1073.2 Q1073.4 499 1077.6 492.6Z M1080.2 492.6 Q1079.6 499 1079.4 505.4 M1081.8 492.6 Q1082.8 499 1083 505.4 M1076.2 492.8 Q1075.6 499 1076 505.4 M1075 496.8 Q1080 497.6 1085.2 496.8 M1073.8 501 Q1080 502 1086.2 501" fill="none" stroke="#a0a0a0" stroke-width=".9"/>
<path d="M1124.6 493.5 H1118.4 V505.2 H1127.6 V497.4" fill="none" stroke="#a8a8a8" stroke-width="1"/><path d="M1120.2 498 H1125.6 M1120.2 500.4 H1125.6 M1120.2 502.8 H1125.6" stroke="#a8a8a8" stroke-width="1.2"/><path d="M1125.4 494.4 H1129.8 M1127.6 492.2 V496.6" stroke="#a8a8a8" stroke-width="1"/>
<rect x="1138.8" y="493" width="8.6" height="12.2" fill="none" stroke="#a8a8a8" stroke-width="1"/>
<rect x="1141" y="494.6" width="1.4" height="1.4" fill="#a8a8a8"/>
<rect x="1143.6" y="494.6" width="1.4" height="1.4" fill="#a8a8a8"/>
<rect x="1142.3" y="496.6" width="1.4" height="1.4" fill="#a8a8a8"/>
<rect x="1141" y="498.6" width="1.4" height="1.4" fill="#a8a8a8"/>
<rect x="1143.6" y="498.6" width="1.4" height="1.4" fill="#a8a8a8"/>
<rect x="1142.3" y="500.6" width="1.4" height="1.4" fill="#a8a8a8"/>
<rect x="1141" y="502.6" width="1.4" height="1.4" fill="#a8a8a8"/>
<rect x="1143.6" y="502.6" width="1.4" height="1.4" fill="#a8a8a8"/>
<path d="M1158 494.6 H1168 M1161 494.4 V492.8 H1165 V494.4 M1159.4 495 V504.2 a1 1 0 0 0 1 1 H1165.6 a1 1 0 0 0 1 -1 V495 M1161.8 497 V503 M1164.2 497 V503" fill="none" stroke="#a8a8a8" stroke-width="1"/>
<rect x="927.6" y="580.6" width="29" height="28.6" fill="#666"/>
<rect x="923.8" y="576.8" width="5.6" height="5.6" fill="#666"/>
<rect x="923.8" y="592.2" width="5.6" height="5.6" fill="#666"/>
<rect x="923.8" y="607.2" width="5.6" height="5.6" fill="#666"/>
<rect x="939" y="576.8" width="5.6" height="5.6" fill="#666"/>
<rect x="939" y="607.2" width="5.6" height="5.6" fill="#666"/>
<rect x="954.6" y="576.8" width="5.6" height="5.6" fill="#666"/>
<rect x="954.6" y="592.2" width="5.6" height="5.6" fill="#666"/>
<rect x="954.6" y="607.2" width="5.6" height="5.6" fill="#666"/>
<path d="M1045.8 617 L1049.1 620.3 L1052.4 617 M1139.7 617 L1143 620.3 L1146.3 617 M1139.7 648 L1143 651.3 L1146.3 648" fill="none" stroke="#cfcfcf" stroke-width="1.1"/>
<path d="M1162.4 575 V569 a1.6 1.6 0 0 1 1.6 -1.6 H1166.2 a1.6 1.6 0 0 1 1.6 1.6 V575 M1162.4 579 V585 a1.6 1.6 0 0 0 1.6 1.6 H1166.2 a1.6 1.6 0 0 0 1.6 -1.6 V579" fill="none" stroke="#d0d0d0" stroke-width="1"/><path d="M1161.4 577 H1164 M1166.2 577 H1168.8" stroke="#9a9a9a" stroke-width="1"/>
<rect x="1112.6" y="642.6" width="15" height="14" rx="1" fill="none" stroke="#666" stroke-width="1.2" stroke-dasharray="4 2"/><rect x="1112" y="648.4" width="9.6" height="8.6" rx="2" fill="#646464"/>
</svg>
</div>

<!-- STATUS BAR -->
<div id="status">
  <span class="t" style="left:20.5px;top:7px;font-size:12px;letter-spacing:.15px;color:#d0d0d0">选取项已锁定，无法移动。解锁选取项对其进行变换。</span>
<svg style="left:1159px;top:7px" width="17" height="17" viewBox="1160 680 17 17"><g fill="#bcbcbc"><rect x="1171" y="686" width="1" height="1"/><rect x="1169" y="688" width="1" height="1"/><rect x="1171" y="688" width="1" height="1"/><rect x="1167" y="690" width="1" height="1"/><rect x="1169" y="690" width="1" height="1"/><rect x="1171" y="690" width="1" height="1"/><rect x="1165" y="692" width="1" height="1"/><rect x="1167" y="692" width="1" height="1"/><rect x="1169" y="692" width="1" height="1"/><rect x="1171" y="692" width="1" height="1"/></g></svg>
</div>

</div>
</body>
</html>
